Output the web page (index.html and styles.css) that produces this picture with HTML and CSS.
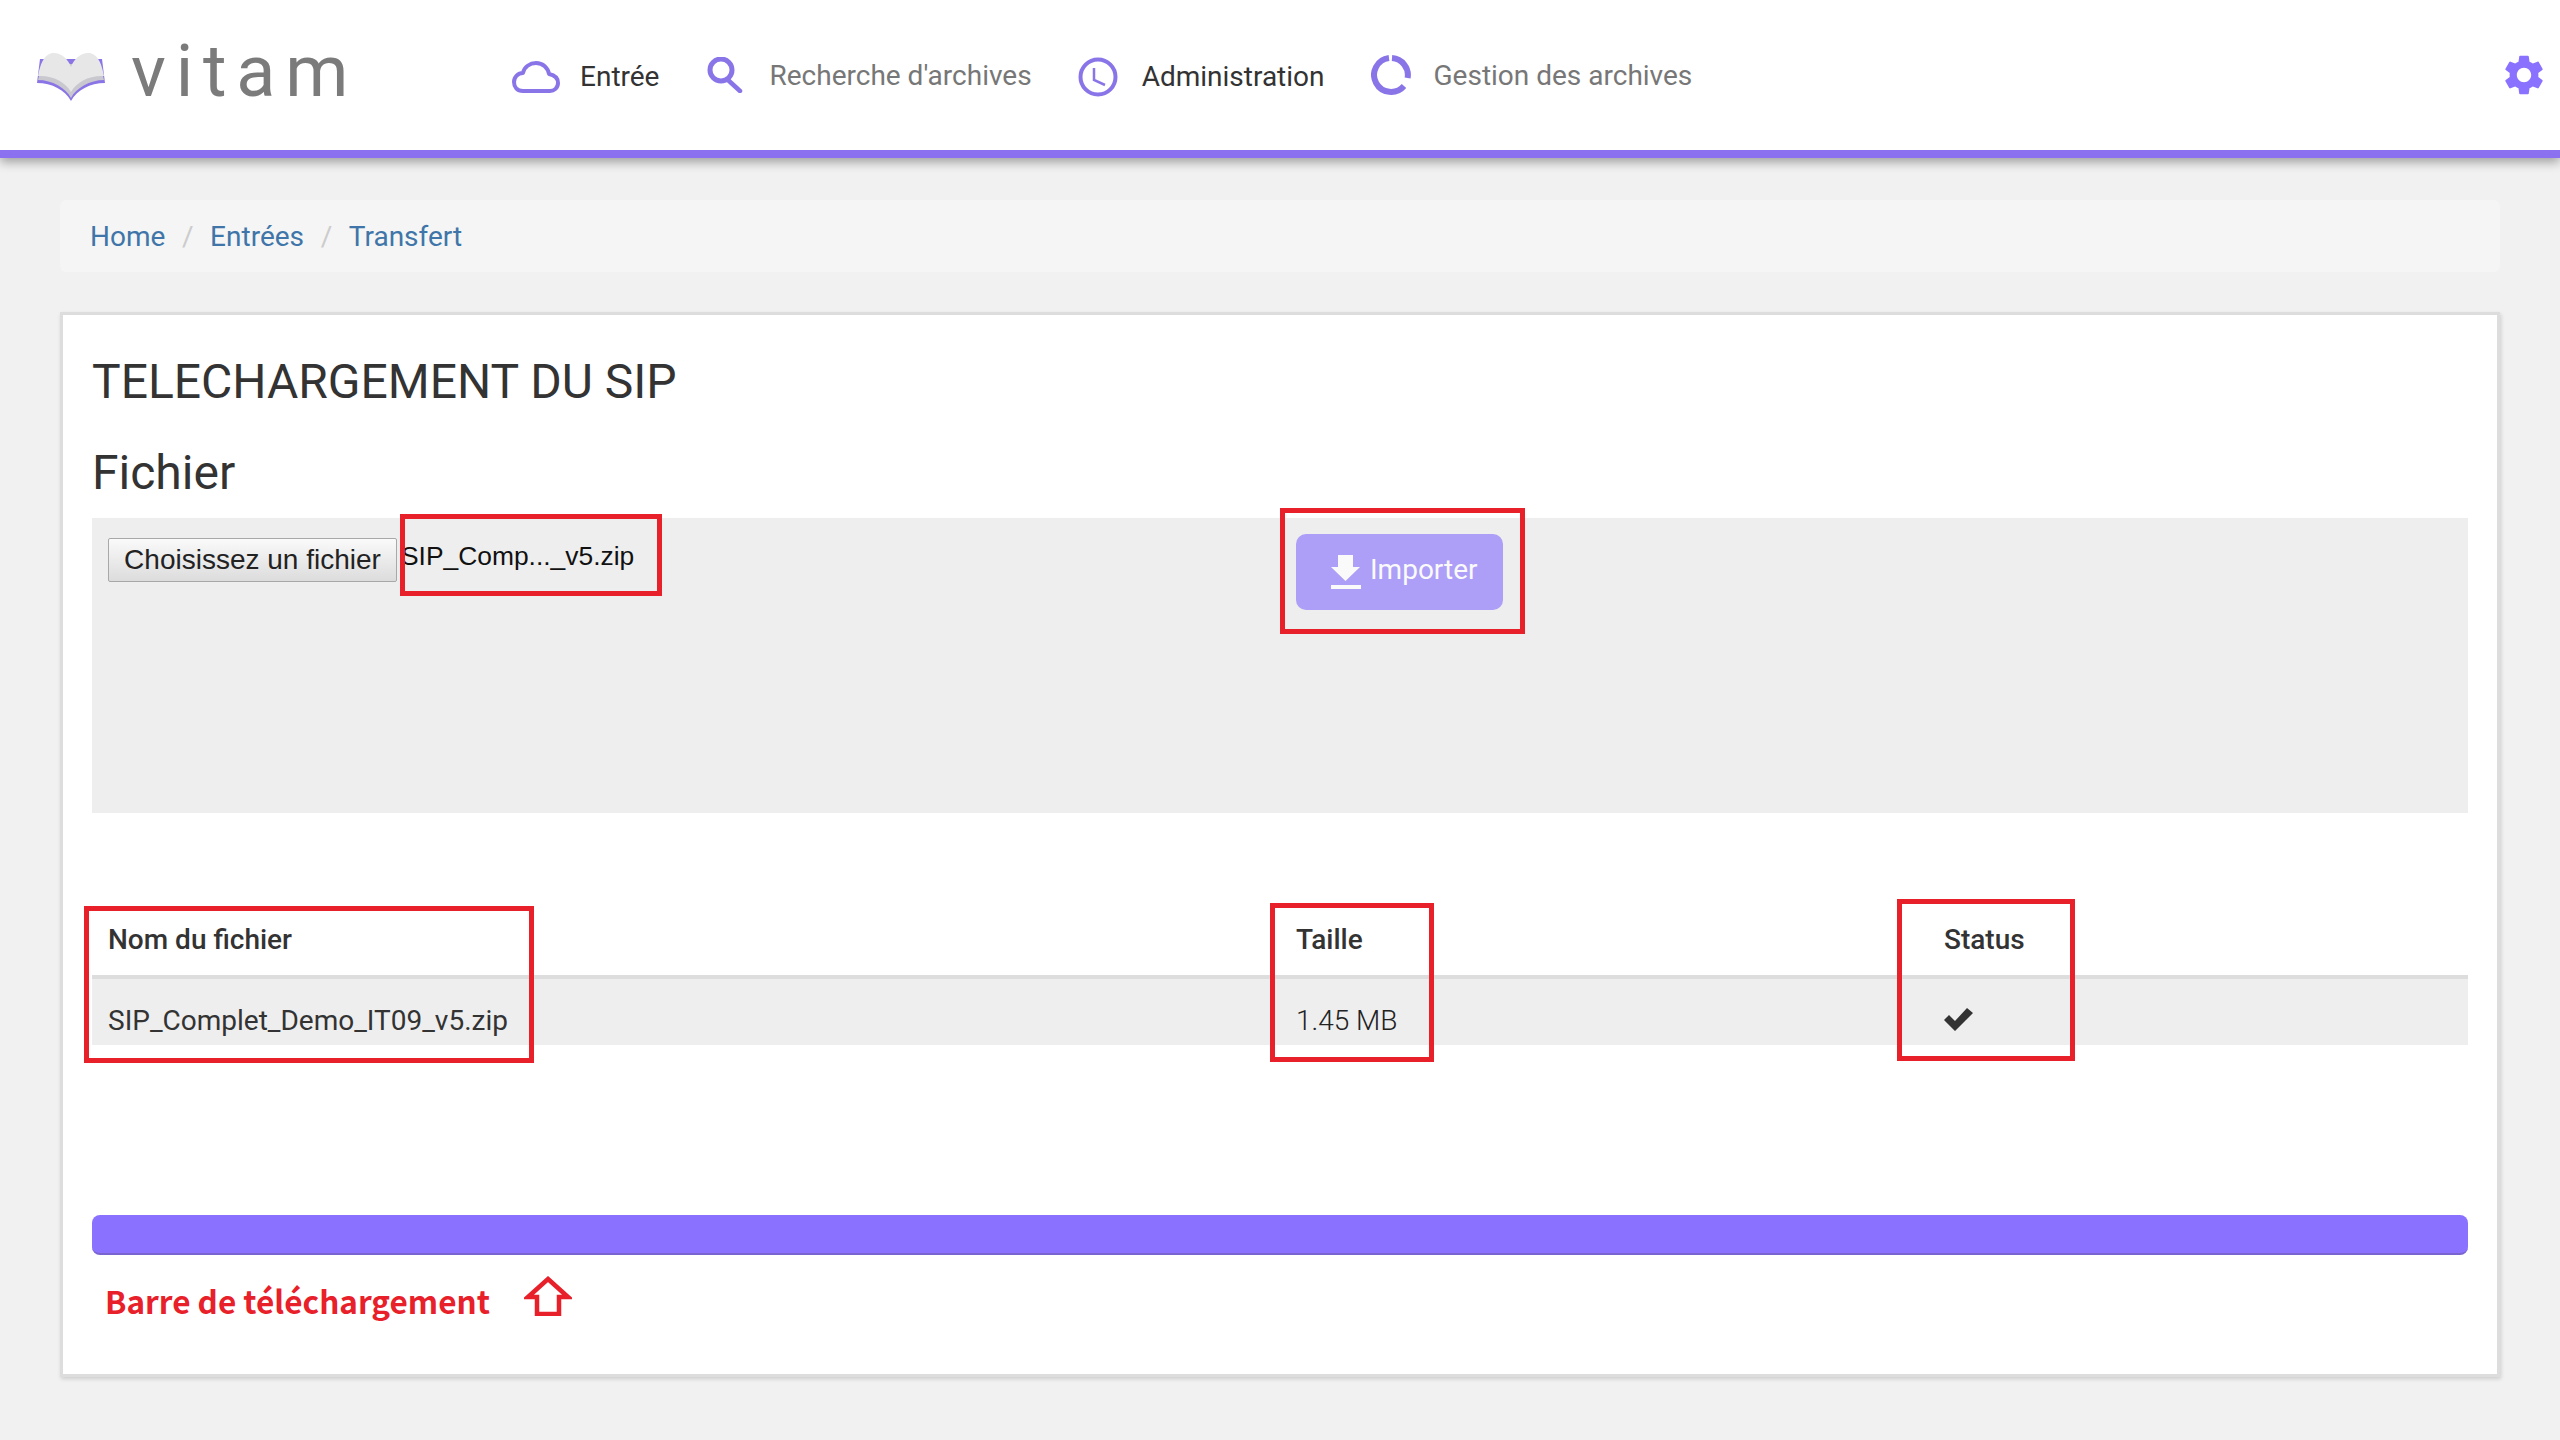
FILE: index.html
```html
<!DOCTYPE html>
<html lang="fr">
<head>
    <meta charset="UTF-8">
    <title>Vitam - Transfert</title>
    <link rel="stylesheet" href="styles.css">
</head>
<body>

    <header class="topbar">
        <div class="logo">
            <svg class="logo-icon" width="70" height="50" viewBox="0 0 70 50">
                <path d="M35 49 C29 38 16 31 1 31 L4 7 L66 7 L69 31 C54 31 41 38 35 49Z" fill="#8b75e6"/>
                <path d="M35 46 C30 36 16 28 2 28 L6 12 L64 12 L68 28 C54 28 40 36 35 46Z" fill="#c9c8cf"/>
                <path d="M35 40 C30 30 16 23 2 24 C4 14 7 3 16 1 C24 0 32 6 35 15 C38 6 46 0 54 1 C63 3 66 14 68 24 C54 23 40 30 35 40Z" fill="#e7e7e8"/>
            </svg>
            <span class="logo-text">vitam</span>
        </div>
        <nav class="nav">
            <a class="nav-item nav-item-entry active">
                <svg width="48" height="32" viewBox="0 0 48 32" fill="none" stroke="#8a75e8" stroke-width="4" stroke-linejoin="round">
                    <path d="M11 30 C5 30 2 26 2 21 C2 16 6 12 11 12 C12 6 18 2 24 2 C31 2 36 7 37 13 C42 14 46 17 46 22 C46 27 42 30 38 30 Z"/>
                </svg>
                Entrée
            </a>
            <a class="nav-item nav-item-search">
                <svg width="36" height="36" viewBox="0 0 36 36" fill="none" stroke="#8a75e8" stroke-linecap="round">
                    <circle cx="14" cy="13" r="11" stroke-width="5"/>
                    <path d="M21 23 L33 34" stroke-width="4.5"/>
                </svg>
                Recherche d'archives
            </a>
            <a class="nav-item active">
                <svg width="40" height="40" viewBox="0 0 40 40" fill="none" stroke="#8a75e8">
                    <circle cx="20" cy="20" r="17.5" stroke-width="4"/>
                    <path d="M16 11 V23 L27 28" stroke-width="2.5"/>
                </svg>
                Administration
            </a>
            <a class="nav-item nav-item-manage">
                <svg width="40" height="40" viewBox="0 0 40 40" fill="none" stroke="#8a75e8" stroke-width="6">
                    <path d="M21 3.06 A17 17 0 0 1 36.6 23"/>
                    <path d="M33 31 A17 17 0 1 1 18 3.06"/>
                </svg>
                Gestion des archives
            </a>
        </nav>
        <svg class="settings" width="48" height="48" viewBox="0 0 24 24" fill="#8b71ff">
            <path d="M19.14 12.94c.04-.3.06-.61.06-.94 0-.32-.02-.64-.07-.94l2.03-1.58c.18-.14.23-.41.12-.61l-1.92-3.32c-.12-.22-.37-.29-.59-.22l-2.39.96c-.5-.38-1.03-.7-1.62-.94l-.36-2.54c-.04-.24-.24-.41-.48-.41h-3.84c-.24 0-.43.17-.47.41l-.36 2.54c-.59.24-1.13.57-1.62.94l-2.39-.96c-.22-.08-.47 0-.59.22L2.74 8.87c-.12.21-.08.47.12.61l2.03 1.58c-.05.3-.09.63-.09.94s.02.64.07.94l-2.03 1.58c-.18.14-.23.41-.12.61l1.92 3.32c.12.22.37.29.59.22l2.39-.96c.5.38 1.03.7 1.62.94l.36 2.54c.05.24.24.41.48.41h3.84c.24 0 .44-.17.47-.41l.36-2.54c.59-.24 1.13-.56 1.62-.94l2.39.96c.22.08.47 0 .59-.22l1.92-3.32c.12-.22.07-.47-.12-.61l-2.01-1.58zM12 15.6c-1.98 0-3.6-1.62-3.6-3.6s1.62-3.6 3.6-3.6 3.6 1.62 3.6 3.6-1.62 3.6-3.6 3.6z"/>
        </svg>
    </header>

    <main class="content">
        <ol class="breadcrumb">
            <li><a>Home</a></li>
            <li class="sep">/</li>
            <li><a>Entrées</a></li>
            <li class="sep">/</li>
            <li><a>Transfert</a></li>
        </ol>

        <section class="panel">
            <h1>TELECHARGEMENT DU SIP</h1>
            <h2>Fichier</h2>

            <div class="upload-box">
                <div class="file-field">
                    <button class="file-button">Choisissez un fichier</button>
                    <span class="file-name">SIP_Comp..._v5.zip</span>
                </div>
                <button class="import-button">
                    <svg width="30" height="34" viewBox="0 0 30 34" fill="#fafafa">
                        <path d="M7 0 H22 V12 H29 L14.5 26 L0 12 H7Z"/>
                        <rect y="30" width="30" height="4"/>
                    </svg>
                    <span class="import-label">Importer</span>
                </button>
            </div>

            <table class="files">
                <thead>
                    <tr>
                        <th class="col-name">Nom du fichier</th>
                        <th class="col-size">Taille</th>
                        <th>Status</th>
                    </tr>
                </thead>
                <tbody>
                    <tr>
                        <td>SIP_Complet_Demo_IT09_v5.zip</td>
                        <td class="light">1.45 MB</td>
                        <td>
                            <svg class="check" width="29" height="23" viewBox="0 0 29 23" fill="#333">
                                <polygon points="0,12 5,7 11,13 23,0 29,5 11,23"/>
                            </svg>
                        </td>
                    </tr>
                </tbody>
            </table>

            <div class="progress"></div>

            <div class="progress-label">
                <span>Barre de téléchargement</span>
                <svg class="label-arrow" width="48" height="40" viewBox="0 0 48 40" fill="none" stroke="#e8202a" stroke-width="4.5">
                    <polygon points="24,3 44,21 35,21 35,38 13,38 13,21 4,21"/>
                </svg>
            </div>
        </section>
    </main>

    <!-- red annotations drawn over the screenshot -->
    <div class="mark mark-file"></div>
    <div class="mark mark-import"></div>
    <div class="mark mark-name"></div>
    <div class="mark mark-size"></div>
    <div class="mark mark-status"></div>

</body>
</html>
```

FILE: styles.css
```css
* {
    box-sizing: border-box;
}

body {
    margin: 0;
    min-height: 1440px;
    overflow: hidden;
    font-family: 'Roboto', sans-serif;
    font-size: 28px;
    background-color: #f1f1f1;
    color: #333;
    position: relative;
}

.topbar {
    display: flex;
    align-items: center;
    height: 158px;
    padding: 0 12px 0 36px;
    background-color: #fff;
    border-bottom: 8px solid #8b71f0;
    box-shadow: 0 4px 10px rgba(0, 0, 0, 0.35);
}

.logo {
    display: flex;
    align-items: center;
    width: 476px;
    gap: 25px;
}

.logo-icon {
    margin-top: 4px;
}

.logo-text {
    font-size: 72px;
    font-weight: 400;
    letter-spacing: 9.8px;
    color: #7b7b7b;
    margin-top: -8px;
}

.nav {
    display: flex;
    align-items: center;
    gap: 46px;
}

.nav-item {
    display: flex;
    align-items: center;
    gap: 24px;
    color: #777;
}

.nav-item.active {
    padding-top: 3px;
    color: #333;
}

.nav-item-entry {
    gap: 20px;
    margin-right: 2px;
}

.nav-item-search {
    gap: 26px;
}

.nav-item-manage {
    gap: 23px;
}

.settings {
    margin-left: auto;
}

.content {
    padding: 42px 60px 0;
}

.breadcrumb {
    display: flex;
    align-items: center;
    gap: 16.6px;
    height: 72px;
    margin: 0 0 40px;
    padding: 0 30px;
    list-style: none;
    background-color: #f5f5f5;
    border-radius: 6px;
}

.breadcrumb a {
    color: #3f75a8;
}

.sep {
    color: #ccc;
}

.panel {
    height: 1065px;
    padding: 39px 29px 0;
    background-color: #fff;
    border: 3px solid #ddd;
    box-shadow: 1px 2px 4px rgba(0, 0, 0, 0.15);
}

h1, h2 {
    margin: 0;
    font-size: 48px;
    font-weight: 400;
    line-height: 56px;
}

h2 {
    margin-top: 35px;
}

.upload-box {
    display: flex;
    align-items: flex-start;
    height: 295px;
    margin-top: 17px;
    padding: 16px;
    background-color: #eee;
}

.file-field {
    display: flex;
    align-items: flex-start;
    gap: 4px;
    width: 1188px;
    font-family: 'Liberation Sans', sans-serif;
    font-size: 28px;
}

.file-button {
    width: 289px;
    height: 44px;
    margin-top: 4px;
    padding: 0;
    font: inherit;
    color: #222;
    background: linear-gradient(#fafafa, #dcdcdc);
    border: 1px solid #a8a8a8;
    border-radius: 2px;
}

.file-name {
    font-size: 26.4px;
    line-height: 44px;
    color: #111;
}

.import-button {
    display: flex;
    align-items: center;
    gap: 9px;
    width: 207px;
    height: 76px;
    padding: 0 0 0 35px;
    font: inherit;
    color: #fafafa;
    background-color: #ad9ef8;
    border: none;
    border-radius: 10px;
}

.import-label {
    margin-top: -6px;
}

.files {
    width: 100%;
    margin-top: 92px;
    border-collapse: collapse;
    table-layout: fixed;
}

.col-name {
    width: 1188px;
}

.col-size {
    width: 648px;
}

.files th {
    height: 72px;
    padding: 0 16px 2px;
    text-align: left;
    font-weight: 500;
    border-bottom: 4px solid #ddd;
}

.files td {
    height: 66px;
    padding: 23px 16px 5px;
    background-color: #eee;
    line-height: 38px;
}

.light {
    font-weight: 300;
    color: #222;
}

.check {
    display: block;
    margin-top: -3px;
}

.progress {
    height: 40px;
    margin-top: 170px;
    background-color: #8b71ff;
    border-bottom: 2px solid #7a64d0;
    border-radius: 8px;
}

.progress-label {
    display: flex;
    align-items: center;
    gap: 34px;
    margin-top: 21px;
    padding-left: 13px;
    font-family: 'Noto Sans CJK SC', sans-serif;
    font-size: 31.5px;
    font-weight: 700;
    color: #e8202a;
}

.label-arrow {
    margin-bottom: 8px;
}

/* annotations */
.mark {
    position: absolute;
    border: 5px solid #e8202a;
}

.mark-file {
    left: 400px;
    top: 514px;
    width: 262px;
    height: 82px;
}

.mark-import {
    left: 1280px;
    top: 508px;
    width: 245px;
    height: 126px;
}

.mark-name {
    left: 84px;
    top: 906px;
    width: 450px;
    height: 157px;
}

.mark-size {
    left: 1270px;
    top: 903px;
    width: 164px;
    height: 159px;
}

.mark-status {
    left: 1897px;
    top: 899px;
    width: 178px;
    height: 162px;
}
```
